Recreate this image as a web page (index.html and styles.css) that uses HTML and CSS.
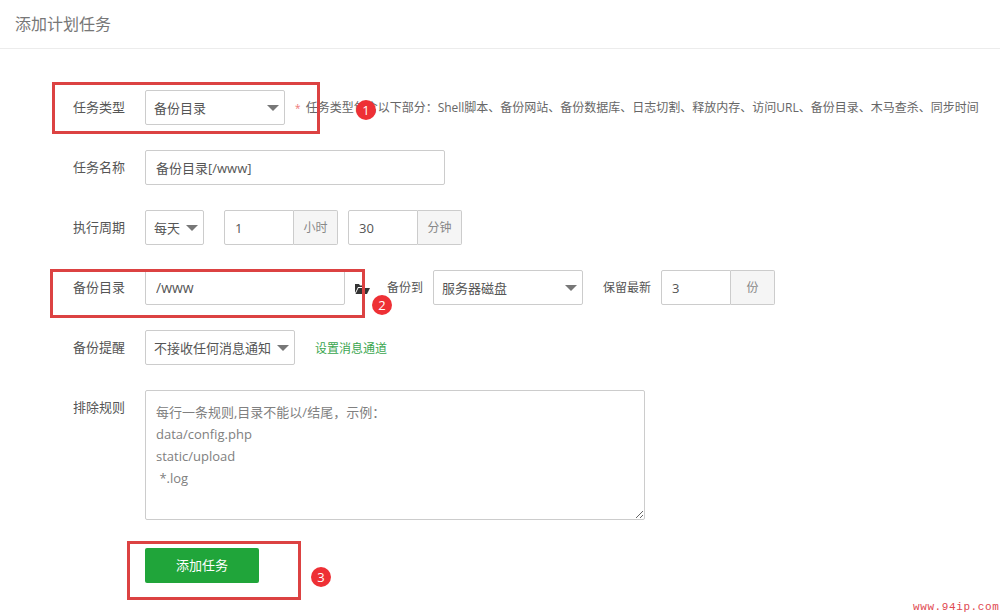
FILE: index.html
```html
<!DOCTYPE html>
<html lang="zh-CN">
<head>
<meta charset="utf-8">
<title>添加计划任务</title>
<link rel="stylesheet" href="styles.css">
</head>
<body>
<header class="title-bar">添加计划任务</header>
<form class="form">
  <div class="row">
    <label class="label">任务类型</label>
    <div class="select w-140"><span>备份目录</span><i class="caret"></i></div>
    <p class="note"><span class="star">*</span> 任务类型包含以下部分：Shell脚本、备份网站、备份数据库、日志切割、释放内存、访问URL、备份目录、木马查杀、同步时间</p>
  </div>
  <div class="row">
    <label class="label">任务名称</label>
    <input class="input w-300" value="备份目录[/www]">
  </div>
  <div class="row">
    <label class="label">执行周期</label>
    <div class="select w-59"><span>每天</span><i class="caret"></i></div>
    <div class="group ml-20"><input class="input join w-70" value="1"><span class="addon">小时</span></div>
    <div class="group ml-10"><input class="input join w-70" value="30"><span class="addon">分钟</span></div>
  </div>
  <div class="row">
    <label class="label">备份目录</label>
    <input class="input path w-200" value="/www">
    <svg class="folder" width="16" height="12" viewBox="0 0 16 12"><path d="M1 11V2h4l1 1.500h5V5H4L1 11z" fill="#333"/><path d="M4.500 6H16l-3 6H1.500z" fill="#333"/></svg>
    <span class="inline-label first">备份到</span>
    <div class="select w-150"><span>服务器磁盘</span><i class="caret"></i></div>
    <span class="inline-label second">保留最新</span>
    <div class="group"><input class="input join w-70" value="3"><span class="addon">份</span></div>
  </div>
  <div class="row">
    <label class="label">备份提醒</label>
    <div class="select w-150"><span>不接收任何消息通知</span><i class="caret"></i></div>
    <a class="link">设置消息通道</a>
  </div>
  <div class="row">
    <label class="label">排除规则</label>
    <textarea class="textarea" placeholder="每行一条规则,目录不能以/结尾，示例：
data/config.php
static/upload
 *.log"></textarea>
  </div>
  <div class="row submit">
    <button class="button" type="button">添加任务</button>
  </div>
</form>
<div class="mark box-1"></div>
<div class="mark box-2"></div>
<div class="mark box-3"></div>
<span class="dot dot-1">1</span>
<span class="dot dot-2">2</span>
<span class="dot dot-3">3</span>
<span class="watermark">www.94ip.com</span>
</body>
</html>
```
FILE: styles.css
```css
* { box-sizing: border-box; }
html, body { margin: 0; height: 615px; overflow: hidden; background: #fff; }
body { position: relative; font-family: "Open Sans", "Noto Sans CJK SC", sans-serif; font-size: 13px; color: #555; }
.title-bar { height: 49px; padding-left: 15px; border-bottom: 1px solid #ececec; font-size: 16px; line-height: 49px; color: #777; }
.form { padding: 41px 0 0 73px; }
.row { display: flex; align-items: flex-start; height: 35px; margin-bottom: 25px; }
.row:nth-child(6) { height: 130px; margin-bottom: 28px; }
.submit { padding-left: 72px; }
.label { flex: none; width: 52px; margin-right: 20px; line-height: 35px; white-space: nowrap; color: #555; }
.select { flex: none; display: flex; align-items: center; justify-content: space-between; height: 35px; padding: 0 5px 0 8px; border: 1px solid #ccc; border-radius: 2px; color: #555; white-space: nowrap; }
.caret { width: 0; height: 0; border-left: 6.500px solid transparent; border-right: 6.500px solid transparent; border-top: 6px solid #777; margin-top: 1px; }
.w-140 { width: 140px; }
.w-150 { width: 150px; }
.w-59 { width: 59px; }
.w-300 { width: 300px; }
.w-200 { width: 200px; }
.w-70 { width: 70px; }
.ml-20 { margin-left: 20px; }
.ml-10 { margin-left: 10px; }
.input { flex: none; height: 35px; padding: 0 10px; border: 1px solid #ccc; border-radius: 2px; font: inherit; color: #555; outline: none; }
.path { font-size: 14px; }
.join { border-radius: 2px 0 0 2px; }
.group { flex: none; display: flex; }
.addon { width: 44px; height: 35px; border: 1px solid #ccc; border-left: 0; border-radius: 0 2px 2px 0; background: #f5f5f5; font-size: 12px; line-height: 33px; text-align: center; color: #888; }
.note { margin: 0 0 0 10px; font-size: 12px; line-height: 35px; white-space: nowrap; color: #666; }
.star { margin-right: 2px; color: #e77; font-size: 10px; }
.folder { flex: none; margin: 12px 0 0 9px; }
.inline-label { flex: none; line-height: 35px; font-size: 12px; color: #555; }
.first { margin: 0 10px 0 17px; }
.second { margin: 0 10px 0 20px; }
.link { margin: 1px 0 0 20px; font-size: 12px; line-height: 35px; color: #3aa64f; }
.textarea { flex: none; display: block; width: 500px; height: 130px; padding: 10px; border: 1px solid #ccc; border-radius: 2px; font: inherit; line-height: 22px; color: #555; outline: none; }
.textarea::placeholder { color: #808080; opacity: 1; }
.button { width: 114px; height: 35px; padding: 0 0 2px; border: 0; border-radius: 2px; background: #20a53a; font: inherit; color: #fff; }
.mark { position: absolute; border: 3px solid #dc4242; }
.box-1 { left: 52px; top: 82px; width: 268px; height: 52px; }
.box-2 { left: 50px; top: 269px; width: 315px; height: 49px; }
.box-3 { left: 127px; top: 541px; width: 174px; height: 59px; }
.dot { position: absolute; width: 20px; height: 20px; border-radius: 50%; background: #ee3035; color: #fff; font-size: 13px; line-height: 20px; text-align: center; }
.dot-1 { left: 356px; top: 100px; }
.dot-2 { left: 372px; top: 295px; }
.dot-3 { left: 311px; top: 567px; }
.watermark { position: absolute; left: 913px; top: 601px; font-family: "Liberation Mono", monospace; font-size: 11px; letter-spacing: 0.600px; line-height: 12px; color: #e0484f; white-space: nowrap; }
```
